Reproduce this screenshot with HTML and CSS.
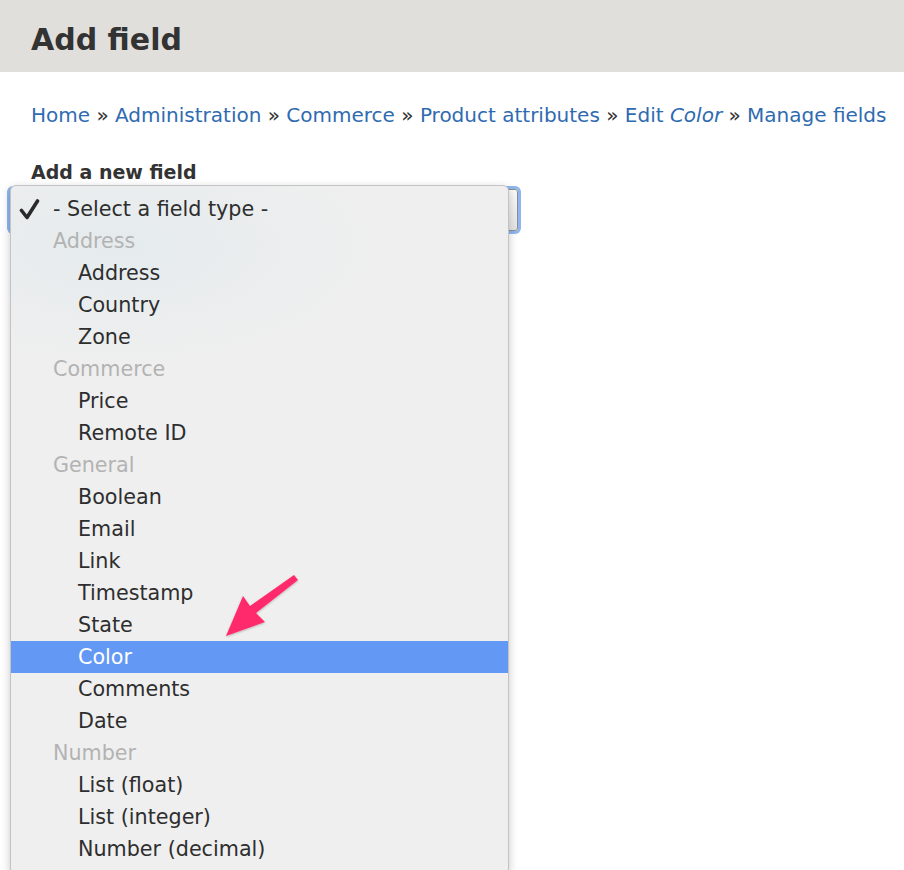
FILE: index.html
```
<!DOCTYPE html>
<html>
<head>
<meta charset="utf-8">
<link rel="stylesheet" href="styles.css">
</head>
<body>
<header class="page-header"><h1 class="title">Add field</h1></header>
<main class="content">
  <nav class="breadcrumb">
    <a href="#">Home</a> <span class="sep">»</span> <a href="#">Administration</a> <span class="sep">»</span> <a href="#">Commerce</a> <span class="sep">»</span> <a href="#">Product attributes</a> <span class="sep">»</span> <a href="#">Edit <em>Color</em></a> <span class="sep">»</span> <a href="#">Manage fields</a>
  </nav>
  <div class="field">
    <div class="field-label">Add a new field</div>
    <div class="select-wrap">
      <div class="select-box"></div>
      <div class="dropdown">
        <div class="opt selected"><svg class="check" width="24" height="24" viewBox="0 0 24 24"><path d="M2.5 13.5 L8 20.5 L18.5 4" fill="none" stroke="#2a2a2a" stroke-width="3.6" stroke-linecap="round" stroke-linejoin="round"/></svg>- Select a field type -</div>
        <div class="group">Address</div>
        <div class="opt">Address</div>
        <div class="opt">Country</div>
        <div class="opt">Zone</div>
        <div class="group">Commerce</div>
        <div class="opt">Price</div>
        <div class="opt">Remote ID</div>
        <div class="group">General</div>
        <div class="opt">Boolean</div>
        <div class="opt">Email</div>
        <div class="opt">Link</div>
        <div class="opt">Timestamp</div>
        <div class="opt">State</div>
        <div class="opt active">Color</div>
        <div class="opt">Comments</div>
        <div class="opt">Date</div>
        <div class="group">Number</div>
        <div class="opt">List (float)</div>
        <div class="opt">List (integer)</div>
        <div class="opt">Number (decimal)</div>
      </div>
    </div>
  </div>
</main>
<svg class="arrow" width="904" height="870" viewBox="0 0 904 870">
  <defs>
    <filter id="sh" x="-20%" y="-20%" width="140%" height="140%">
      <feDropShadow dx="0" dy="1" stdDeviation="1.2" flood-color="#000" flood-opacity="0.25"/>
    </filter>
  </defs>
  <polygon filter="url(#sh)" fill="#fe2c6c" points="226,636 243,596 250,606 294,575 298,580 256,613 265,622"/>
</svg>
</body>
</html>
```
FILE: styles.css
```
html, body {
  margin: 0;
  padding: 0;
}
body {
  width: 904px;
  height: 870px;
  overflow: hidden;
  position: relative;
  background: #fff;
  font-family: "DejaVu Sans", Verdana, sans-serif;
  color: #333;
}
.page-header {
  background: #e0dfdb;
  height: 72px;
  padding: 0 31px;
  display: flex;
  align-items: center;
}
.title {
  margin: 0;
  font-size: 30px;
  font-weight: bold;
  color: #333;
  line-height: 1;
  padding-top: 8px;
}
.content {
  padding: 0 0 0 31px;
}
.breadcrumb {
  margin-top: 30px;
  font-size: 20px;
  line-height: 26px;
  white-space: nowrap;
}
.breadcrumb a {
  color: #2f6bb1;
  text-decoration: none;
}
.breadcrumb .sep {
  color: #333;
}
.field {
  margin-top: 34px;
}
.field-label {
  font-size: 19px;
  font-weight: bold;
  line-height: 20px;
  color: #333;
}
.select-wrap {
  position: relative;
  margin-left: -21px;
  margin-top: 3px;
  height: 700px;
}
.select-box {
  position: absolute;
  top: 4px;
  left: 0;
  width: 506px;
  height: 40px;
  border: 1px solid #8d8d8d;
  border-radius: 3px;
  background: linear-gradient(#fafafa, #e4e4e4);
  box-shadow: 0 0 0 3px #8fb6ee;
}
.dropdown {
  position: absolute;
  top: 0;
  left: 0;
  width: 497px;
  padding: 7px 0 8px;
  border: 1px solid #c3c3c3;
  border-radius: 6px;
  background: radial-gradient(ellipse 260px 120px at 110px 60px, #e5ebed, #efefef 100%);
  background-color: #efefef;
  box-shadow: 0 3px 10px rgba(0,0,0,0.22);
  font-size: 20.7px;
}
.opt, .group {
  height: 32px;
  line-height: 32px;
  white-space: nowrap;
}
.opt {
  padding-left: 67px;
  color: #2e2e2e;
}
.opt.selected {
  padding-left: 42px;
  position: relative;
}
.check {
  position: absolute;
  left: 8px;
  top: 4px;
}
.group {
  padding-left: 42px;
  color: #b3b3b3;
}
.opt.active {
  background: #6399f5;
  color: #fff;
}
.arrow {
  position: absolute;
  left: 0;
  top: 0;
  pointer-events: none;
}
```
